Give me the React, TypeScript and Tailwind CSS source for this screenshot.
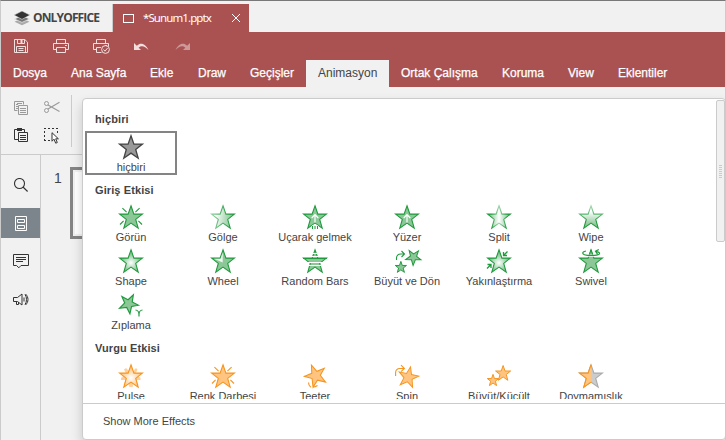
import type { ReactNode } from 'react';

const STAR = 'M12 .8 14.9 9.1H23.4L16.7 14.4 19.2 23.2 12 18.1 4.8 23.2 7.3 14.4.6 9.1H9.1Z';
const GREEN = '#1f9a3c';
const GREEN_FILL = '#8bc797';
const ORANGE = '#f7941d';
const ORANGE_FILL = '#ffc580';

type Effect = { label: string; icon: ReactNode; selected?: boolean };

function Icon({ children }: { children: ReactNode }) {
  return (
    <svg className="block h-6 w-6 shrink-0 overflow-visible" viewBox="0 0 24 24" fill="none">
      {children}
    </svg>
  );
}

function Star({ fill = GREEN_FILL, stroke = GREEN, transform, w = 1.1 }: { fill?: string; stroke?: string; transform?: string; w?: number }) {
  return <path d={STAR} fill={fill} stroke={stroke} strokeWidth={w} transform={transform} />;
}

function Gradients() {
  return (
    <svg className="absolute h-0 w-0">
      <defs>
        <linearGradient id="fade" x1="0.15" y1="0.5" x2="0.95" y2="0.6">
          <stop offset="0" stopColor="#fff" />
          <stop offset="0.9" stopColor={GREEN_FILL} />
        </linearGradient>
        <linearGradient id="fadeStroke" x1="0" x2="1">
          <stop offset="0" stopColor="#8fce9e" />
          <stop offset="0.8" stopColor={GREEN} />
        </linearGradient>
        <radialGradient id="shape" cx="0.5" cy="0.58" r="0.42">
          <stop offset="0" stopColor="#fff" />
          <stop offset="0.9" stopColor={GREEN_FILL} />
        </radialGradient>
        <linearGradient id="split" x1="0.1" x2="0.9">
          <stop offset="0" stopColor={GREEN_FILL} />
          <stop offset="0.5" stopColor="#fff" />
          <stop offset="1" stopColor={GREEN_FILL} />
        </linearGradient>
        <linearGradient id="splitStroke" x1="0" x2="1">
          <stop offset="0.15" stopColor={GREEN} />
          <stop offset="0.5" stopColor="#9bd3a8" />
          <stop offset="0.85" stopColor={GREEN} />
        </linearGradient>
        <linearGradient id="wipe" x1="0" x2="0" y1="0.25" y2="0.85">
          <stop offset="0" stopColor="#fff" />
          <stop offset="1" stopColor={GREEN_FILL} />
        </linearGradient>
        <linearGradient id="wipeStroke" x1="0" x2="0" y1="0" y2="1">
          <stop offset="0" stopColor="#a4d8b0" />
          <stop offset="0.7" stopColor={GREEN} />
        </linearGradient>
        <radialGradient id="pulse" cx="0.5" cy="0.58" r="0.45">
          <stop offset="0" stopColor="#fff" />
          <stop offset="1" stopColor={ORANGE_FILL} />
        </radialGradient>
      </defs>
    </svg>
  );
}

const RAYS = 'M3.4 3.2 7.6 7.2M20.6 3.2 16.4 7.2M1 19.5 4.6 15.8M23 19.5 19.4 15.8';

const none: Effect[] = [
  { label: 'hiçbiri', selected: true, icon: <Star fill="#999" stroke="#444" w={1.3} /> },
];

const entrance: Effect[] = [
  { label: 'Görün', icon: <><Star /><path d={RAYS} stroke={GREEN} strokeWidth="1.1" /></> },
  { label: 'Gölge', icon: <Star fill="url(#fade)" stroke="url(#fadeStroke)" /> },
  {
    label: 'Uçarak gelmek',
    icon: (
      <>
        <Star />
        <path d="M8.5 24h7v-3L12 18.7 8.5 21Z" fill="#fff" />
        <path d="M12 17.5V10M8.7 13 12 9.7l3.3 3.3" stroke="#fff" strokeWidth="1.2" />
        <path d="M9.5 21v3M12 21v3M14.5 21v3" stroke={GREEN} />
      </>
    ),
  },
  { label: 'Yüzer', icon: <><Star /><path d="M12 17.5V10M8.7 13 12 9.7l3.3 3.3" stroke="#fff" strokeWidth="1.2" /></> },
  { label: 'Split', icon: <Star fill="url(#split)" stroke="url(#splitStroke)" /> },
  { label: 'Wipe', icon: <Star fill="url(#wipe)" stroke="url(#wipeStroke)" /> },
  { label: 'Shape', icon: <Star fill="url(#shape)" /> },
  { label: 'Wheel', icon: <><Star /><path d="M11.7 3.5v10L3 9.7h6.5Z" fill="#fff" opacity=".85" /></> },
  {
    label: 'Random Bars',
    icon: (
      <>
        <Star />
        <path d="M0 4.5h24M0 7.5h24M0 13.5h24M0 16.5h24" stroke="#fff" />
        <path d="M0 9.5h24" stroke={GREEN} />
      </>
    ),
  },
  {
    label: 'Büyüt ve Dön',
    icon: (
      <>
        <Star transform="translate(7.6 1.4) rotate(38 12 12) scale(.66)" w={1.5} />
        <Star transform="translate(0 12) scale(.49)" w={2} />
        <path d="M1.5 11V9a4 4 0 0 1 4-4H9M6.5 2l3 3-3 3" stroke={GREEN} strokeWidth="1.1" />
      </>
    ),
  },
  {
    label: 'Yakınlaştırma',
    icon: (
      <>
        <Star fill="url(#shape)" />
        <path d="M20.5 2.5 16.5 6.5M16.5 3v3.5H20M0 19.5l4-4M.5 15.5H4V19" stroke={GREEN} strokeWidth="1.3" />
      </>
    ),
  },
  {
    label: 'Swivel',
    icon: (
      <>
        <Star />
        <path d="M7.5 2C2 2.8 2 6 8.5 6.5h7C22 6 22 3.5 17.5 2.3" stroke="#fff" strokeWidth="2.5" />
        <path d="M7 2C2 3 3 5.8 8.5 6.3h7C22 6 22 3.5 17 2.3M19.8.5 16.5 2.3l2 2.8" stroke={GREEN} strokeWidth="1.2" />
        <path d="m10.5 5.5 1.5-4.7 1.5 4.7" fill={GREEN_FILL} stroke={GREEN} />
      </>
    ),
  },
  {
    label: 'Zıplama',
    icon: (
      <>
        <Star transform="translate(.1 .2) rotate(28 10 10) scale(.82)" w={1.4} />
        <path d="M16.5 17c2 0 3.5 2 3.5 4.5v2M23.5 17c-2 0-3.5 2-3.5 4.5" stroke={GREEN} strokeWidth="1.2" />
      </>
    ),
  },
];

const emphasis: Effect[] = [
  {
    label: 'Pulse',
    icon: (
      <>
        <path d="M7 4 10 7h4l3-3 1.5 1.5-2 4 5 4.5v2h-4l2 5-5-1-1 3h-3l-1-3-5 1 2-5H2v-2l5-4.5-2-4Z" fill="#ffd09a" />
        <Star fill="url(#pulse)" stroke={ORANGE} />
      </>
    ),
  },
  { label: 'Renk Darbesi', icon: <><Star fill={ORANGE_FILL} stroke={ORANGE} /><path d={RAYS} stroke={ORANGE} strokeWidth="1.1" /></> },
  {
    label: 'Teeter',
    icon: (
      <>
        <Star fill={ORANGE_FILL} stroke={ORANGE} transform="translate(1 -.3) rotate(-22 11 11) scale(.94)" />
        <path d="M5.5 18.5c0 2 .7 3.5 2.3 4.7M14.5 21.5c-1.5 1-3 1.6-4.5 1.5" stroke={ORANGE} strokeWidth="1.1" />
      </>
    ),
  },
  {
    label: 'Spin',
    icon: (
      <>
        <Star fill={ORANGE_FILL} stroke={ORANGE} transform="translate(2.8 2) rotate(12 11 11) scale(.88)" />
        <path d="M.6 12V8.5a4 4 0 0 1 4-4H9M6 1.2l3.4 3.3L6 7.7" stroke={ORANGE} strokeWidth="1.1" />
      </>
    ),
  },
  {
    label: 'Büyüt/Küçült',
    icon: (
      <>
        <Star fill={ORANGE_FILL} stroke={ORANGE} transform="translate(8.2 1) scale(.66)" w={1.5} />
        <Star fill={ORANGE_FILL} stroke={ORANGE} transform="translate(0 10) scale(.5)" w={2} />
      </>
    ),
  },
  {
    label: 'Doymamışlık',
    icon: (
      <>
        <Star fill="#ccc" stroke="#aaa" />
        <path d="M12 .8 9.1 9.1H.6l6.7 5.3-2.5 8.8 7.2-5.1" fill={ORANGE_FILL} stroke={ORANGE} strokeWidth="1.1" />
      </>
    ),
  },
];

function Group({ title, effects, height = 'h-[27px]' }: { title: string; effects: Effect[]; height?: string }) {
  return (
    <section>
      <h3 className={`${height} pt-2 pl-[10px] text-[11px] leading-[15px] font-bold tracking-[0.1px]`}>{title}</h3>
      <div className="grid grid-cols-[repeat(6,92px)]">
        {effects.map((e) => (
          <div
            key={e.label}
            className={`flex h-11 w-[92px] flex-col items-center border-2 pt-0.5 ${e.selected ? 'border-[#848484]' : 'border-transparent'}`}
          >
            <Icon>{e.icon}</Icon>
            <span className="mt-[2px] text-[11px] leading-[13px] whitespace-nowrap">{e.label}</span>
          </div>
        ))}
      </div>
    </section>
  );
}

const tabs = [
  ['Dosya', 'w-[34px]'],
  ['Ana Sayfa', 'w-[55px]'],
  ['Ekle', 'w-[24px]'],
  ['Draw', 'w-[28px]'],
  ['Geçişler', 'w-[44px]'],
  ['Animasyon', 'w-[59px]'],
  ['Ortak Çalışma', 'w-[77px]'],
  ['Koruma', 'w-[42px]'],
  ['View', 'w-[26px]'],
  ['Eklentiler', 'w-[50px]'],
];

function TitleBar() {
  return (
    <div className="flex h-[31px] pt-[3px]">
      <div className="flex w-[112px] items-center border-r border-[#cbcbcb] pl-[13px]">
        <svg className="h-[15px] w-4" viewBox="0 0 16 15">
          <path d="M8 7.3 15.5 10.7 8 14.2.5 10.7Z" fill="#aaa" />
          <path d="M8 4.6 15.5 8 8 11.4.5 8Z" fill="#777" stroke="#f1f1f1" strokeWidth=".7" />
          <path d="M8 0 16 4.1 8 8.3 0 4.1Z" fill="#333" stroke="#f1f1f1" strokeWidth=".5" />
        </svg>
        <span className="ml-[3px] font-['Open_Sans',sans-serif] text-[12px] font-bold tracking-[-0.85px] text-[#444]">ONLYOFFICE</span>
      </div>
      <div className="flex w-[136px] items-center bg-[#aa5252] pl-[10px] text-white">
        <span className="h-[9px] w-[11px] border border-white" />
        <span className="ml-[9px] w-[70px] font-['Noto_Sans',sans-serif] text-[11.5px] tracking-[-0.9px] whitespace-nowrap">*Sunum1.pptx</span>
        <svg className="ml-[19px] h-2 w-2" viewBox="0 0 8 8"><path d="m0 0 8 8M8 0 0 8" stroke="#fff" /></svg>
      </div>
    </div>
  );
}

function QuickAccess() {
  return (
    <div className="flex h-7 items-center pl-[13px] text-[#f3dede]">
      <svg className="h-[14px] w-[14px]" viewBox="0 0 14 14" fill="none" stroke="currentColor">
        <path d="M.5.5h10.3l2.7 2.7v10.3H.5ZM3.5.5v4h7v-4M2.5 13.5v-6h9v6M4.5 9.5h5M4.5 11.5h5" />
        <path d="M7.5 1v3" strokeWidth="2" />
      </svg>
      <svg className="ml-[25px] h-[14px] w-4" viewBox="0 0 16 14" fill="none" stroke="currentColor">
        <path d="M3.5 4.5v-4h9v4M3.5 10.5h-3v-6h15v6h-3M3.5 8.5h9v5h-9ZM12 6.5h2" />
      </svg>
      <svg className="ml-6 h-[15px] w-[17px]" viewBox="0 0 17 15" fill="none" stroke="currentColor">
        <path d="M3.5 4.5v-4h9v4M3.5 10.5h-3v-6h15v3M8 8.5H3.5v5h5M12 6.5h2" />
        <circle cx="12.5" cy="10.5" r="3.9" />
        <path d="m10.5 10.5 1.5 1.7 2.6-3.2" />
      </svg>
      <svg className="mt-px ml-6 h-[10px] w-[15px]" viewBox="0 0 15 10" fill="currentColor">
        <path d="M0 1v7h7L4.7 5.7C7.8 2.7 11 4.5 14.5 8 12 2.5 7-.5 2.8 3.8Z" />
      </svg>
      <svg className="mt-px ml-[26px] h-[10px] w-[15px] opacity-50" viewBox="0 0 15 10" fill="currentColor">
        <path d="M15 1v7H8l2.3-2.3C7.2 2.7 4 4.5.5 8 3 2.5 8-.5 12.2 3.8Z" />
      </svg>
    </div>
  );
}

function Toolbar() {
  return (
    <div className="flex h-[68px] shrink-0 border-b border-[#cbcbcb] pt-2">
      <div className="grid h-[52px] w-[71px] grid-cols-2 grid-rows-2 border-r border-[#cbcbcb]">
        <svg className="mt-[6px] ml-[13px] h-[14px] w-[14px]" viewBox="0 0 14 14" fill="none" stroke="#999">
          <path d="M3.5 9.5h-3v-9h9v3M2 3.5h2M2 5.5h2M2 7.5h2M3 2.5h5M4.5 4.5h9v9h-9ZM6 7.5h6M6 9.5h6M6 11.5h6" />
        </svg>
        <svg className="mt-[6px] ml-[8px] h-[12px] w-4" viewBox="0 0 16 12" fill="none" stroke="#999">
          <circle cx="2.5" cy="2.5" r="2" /><circle cx="2.5" cy="9.5" r="2" />
          <path d="m4 4 11.5 6.5M4 8 15.5 1.2" strokeWidth="1.1" />
        </svg>
        <svg className="mt-[7px] ml-[13px] h-[14px] w-[14px]" viewBox="0 0 14 14" fill="none" stroke="#333">
          <path d="M4 11.5H.5v-10h10v3M4.5 4.5h9v9h-9ZM6 7.5h6M6 9.5h6M6 11.5h6" /><path d="M3 1.5h5" strokeWidth="3" />
        </svg>
        <svg className="mt-[7px] ml-[8px] h-4 w-4" viewBox="0 0 16 16" fill="none" stroke="#333">
          <path d="M0 .5h14" strokeDasharray="2 2" /><path d="M.5 3v10M13.5 3v2" strokeDasharray="2 2" /><path d="M0 12.5h6" strokeDasharray="2 2" />
          <path d="M8 4.7v8.5l2-2 1.7 4 1.6-.7-1.6-3.7h2.7Z" fill="#fff" />
        </svg>
      </div>
    </div>
  );
}

function Sidebar() {
  return (
    <aside className="flex w-10 shrink-0 flex-col border-r border-[#cbcbcb] pt-[15px]">
      <div className="flex h-[30px] items-center justify-center">
        <svg className="h-[14px] w-[14px]" viewBox="0 0 14 14" fill="none" stroke="#333" strokeWidth="1.1"><circle cx="5.5" cy="5.5" r="5" /><path d="m9 9 4.6 4.5" /></svg>
      </div>
      <div className="mt-2 flex h-[30px] items-center justify-center bg-[#7d858c]">
        <svg className="h-[15px] w-3" viewBox="0 0 12 15" fill="none" stroke="#fff"><path d="M.5.5h11v14H.5ZM2.5 3.5h7v3h-7ZM2.5 9.5h7v3h-7Z" /></svg>
      </div>
      <div className="mt-2 flex h-[30px] items-center justify-center">
        <svg className="h-[15px] w-4" viewBox="0 0 16 15" fill="none" stroke="#333"><path d="M.5.5h15v11H8l-2.2 2.3-2.2-2.3H.5ZM3 3.5h10M3 5.5h10M3 7.5h7" /></svg>
      </div>
      <div className="mt-2 flex h-[30px] items-center justify-center">
        <svg className="h-[13px] w-4" viewBox="0 0 16 13" fill="none" stroke="#333"><path d="M.5 4.5h4L9 1v11L4.5 8.5h-4ZM3.5 8.5v3h2v-2.5M11 4.5v4M12 1.5c2 2.5 2 7.5 0 10M12.5 1c3.3 3 3.3 8 0 11" /></svg>
      </div>
    </aside>
  );
}

export default function App() {
  return (
    <div className="relative flex h-[440px] w-[726px] flex-col overflow-hidden border-x border-t border-x-[#cbcbcb] border-t-[#7a7778] bg-[#f1f1f1] font-['Liberation_Sans',Arial,sans-serif] text-[#444]">
      <Gradients />
      <TitleBar />
      <header className="flex h-[55px] shrink-0 flex-col bg-[#aa5252]">
        <QuickAccess />
        <nav className="flex h-[27px] text-[12px] leading-[27px] text-white">
          {tabs.map(([name, width]) => (
            <div key={name} className={`box-content shrink-0 px-3 whitespace-nowrap ${width} ${name === 'Animasyon' ? 'bg-[#f1f1f1] text-[#444]' : '[-webkit-text-stroke:0.25px_white]'}`}>
              {name}
            </div>
          ))}
        </nav>
      </header>
      <Toolbar />
      <main className="flex min-h-0 flex-1">
        <Sidebar />
        <div className="flex flex-1 pt-3 pl-[13px]">
          <span className="w-[16px] pt-px text-[14px]">1</span>
          <div className="h-[72px] w-[200px] border-3 border-[#848484] p-0.5">
            <div className="h-full bg-white" />
          </div>
        </div>
      </main>
      <div className="absolute top-[97px] left-[81px] flex h-[342px] w-[644px] flex-col rounded-[4px] border border-[#cbcbcb] bg-white shadow-[0_6px_12px_rgba(0,0,0,0.175)]">
        <div className="flex h-[300px] justify-between overflow-hidden">
          <div className="pt-[5px] pl-[2px]">
            <Group title="hiçbiri" effects={none} />
            <Group title="Giriş Etkisi" effects={entrance} height="h-[26px]" />
            <Group title="Vurgu Etkisi" effects={emphasis} />
          </div>
          <div className="mt-px flex h-[142px] w-[9px] flex-col items-center justify-center gap-px rounded-[2px] border border-[#cbcbcb] bg-[#f1f1f1]">
            {[0, 1, 2, 3, 4, 5, 6].map((i) => <i key={i} className="h-px w-[3px] bg-[#cbcbcb]" />)}
          </div>
        </div>
        <div className="mt-1 flex flex-1 items-center border-t border-[#cbcbcb] pl-5 text-[11px]">Show More Effects</div>
      </div>
    </div>
  );
}
